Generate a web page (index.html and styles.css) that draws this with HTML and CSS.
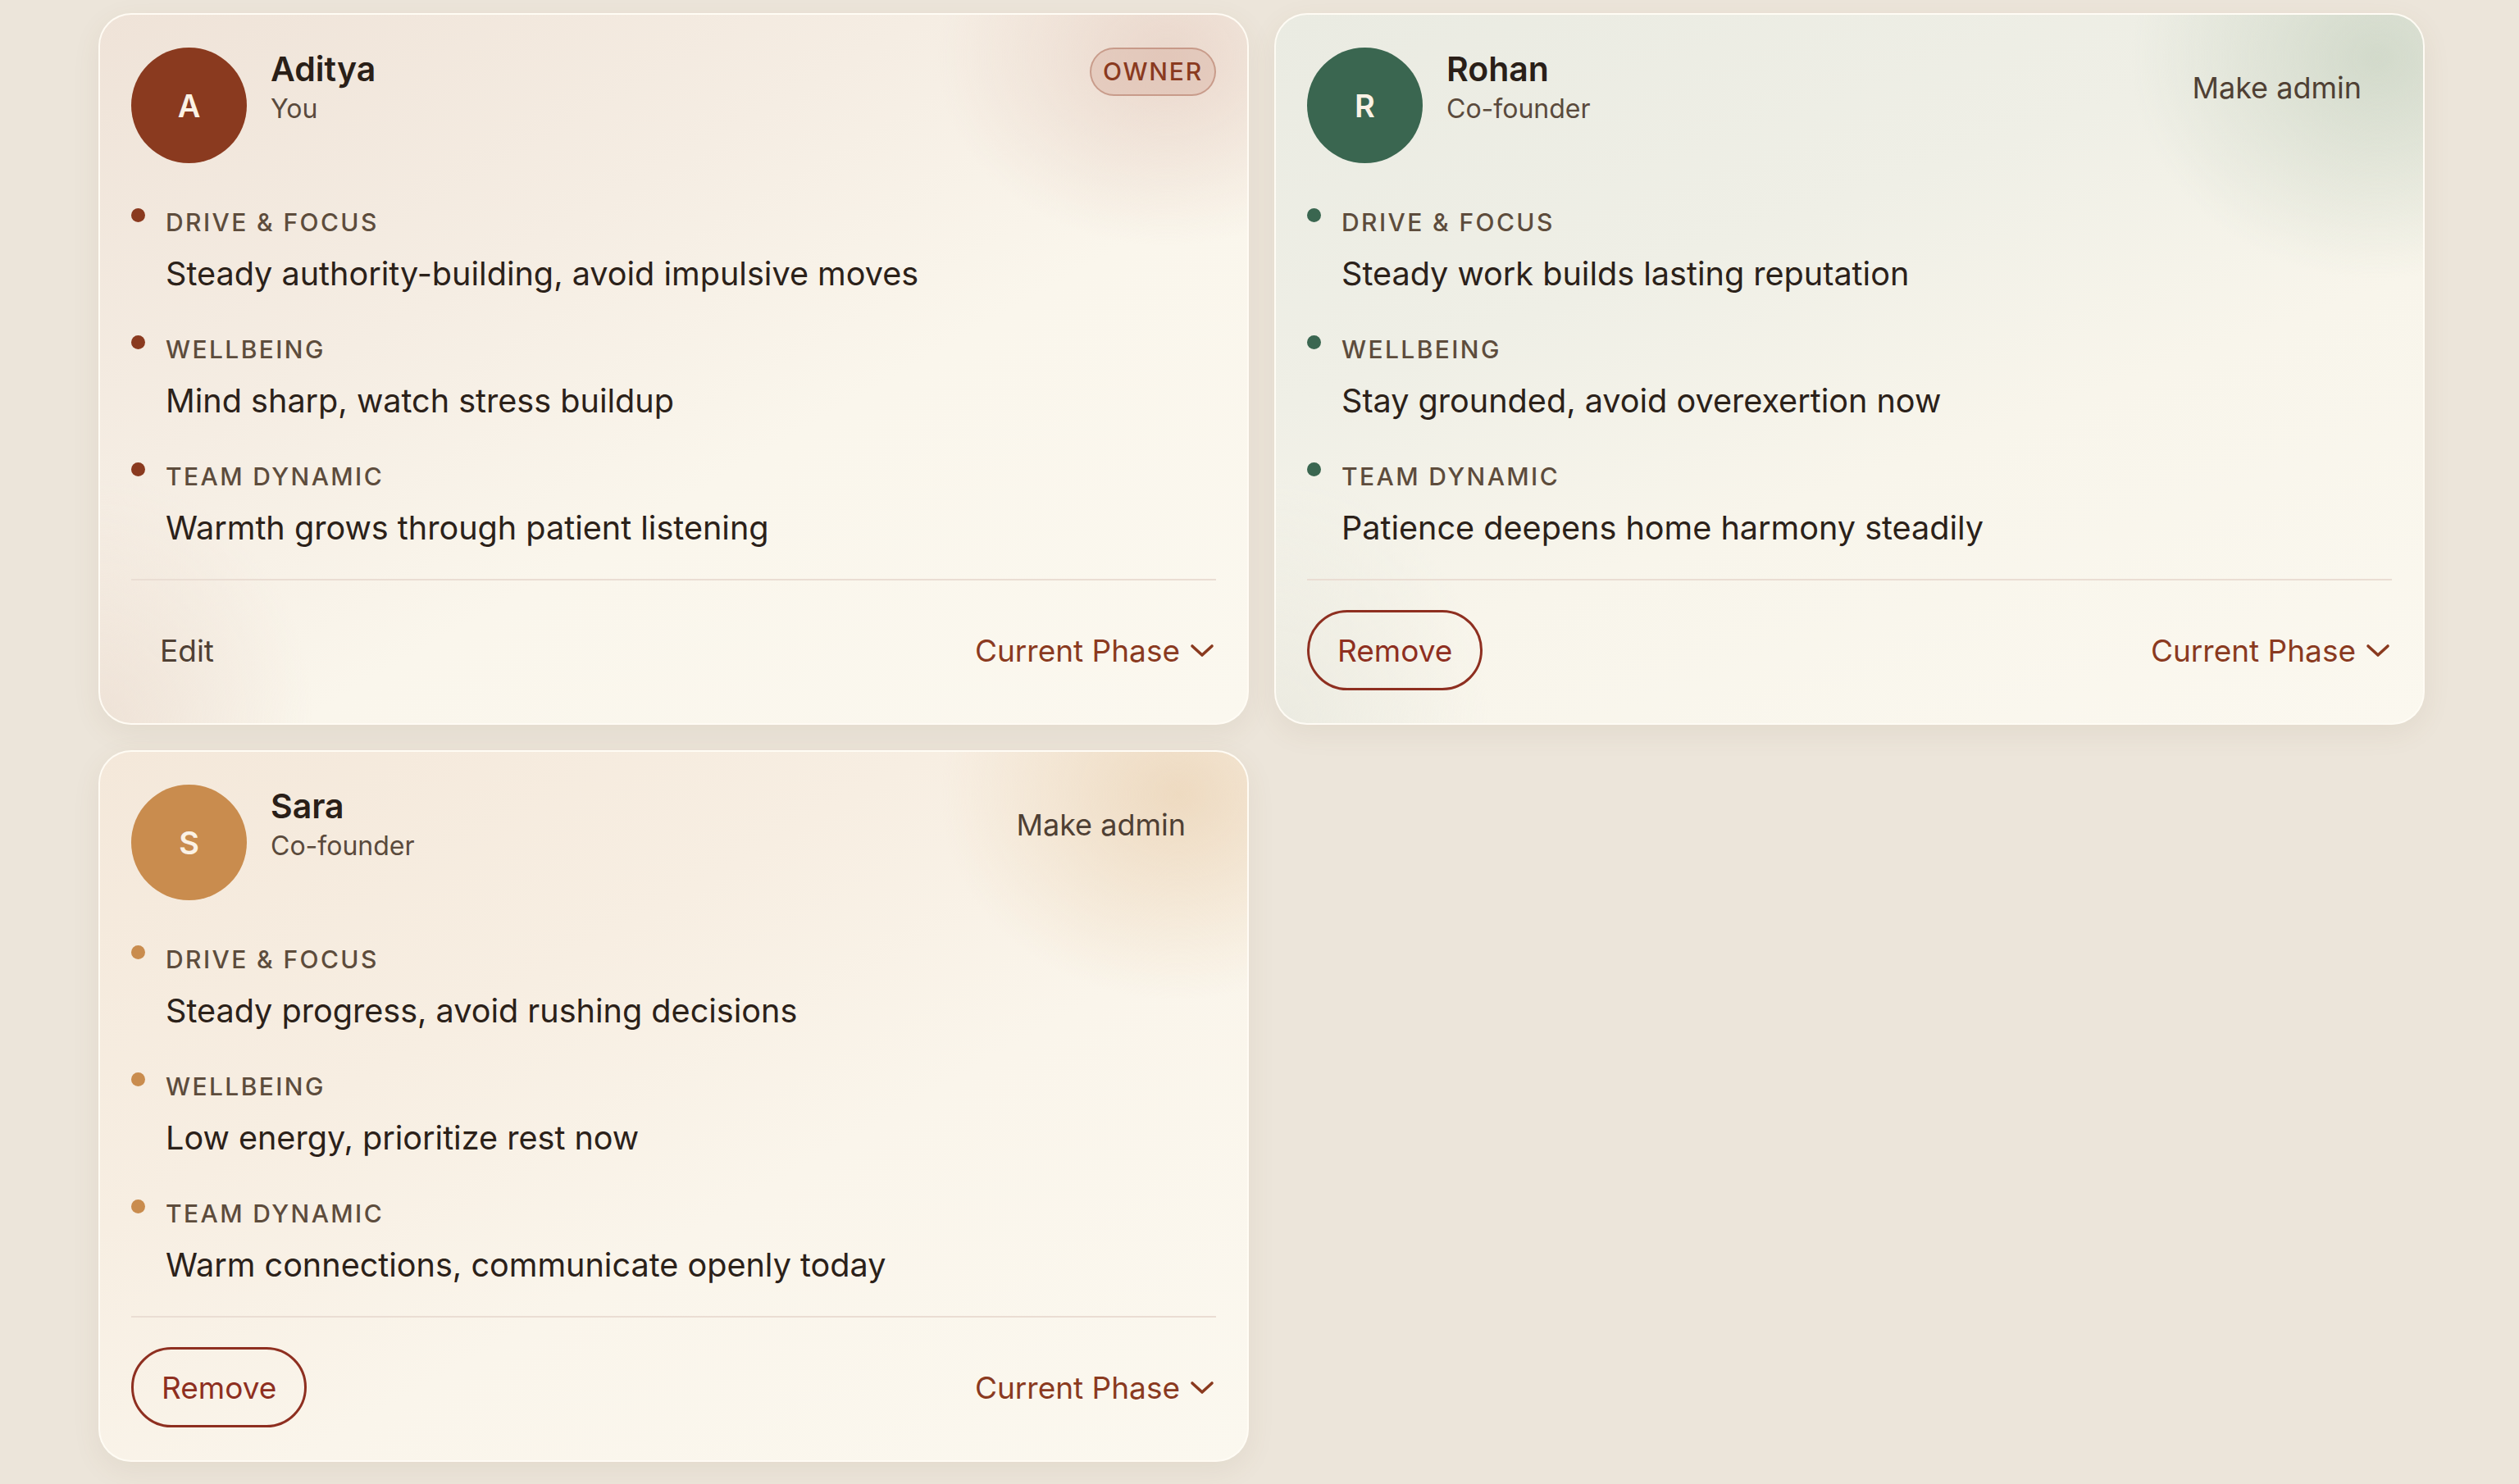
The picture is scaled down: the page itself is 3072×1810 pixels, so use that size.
FILE: index.html
```html
<!DOCTYPE html>
<html lang="en">
<head>
    <meta charset="UTF-8">
    <meta name="viewport" content="width=device-width, initial-scale=1.0">
    <title>Team - Members</title>
    <link rel="stylesheet" href="styles.css">
</head>
<body>
    <main class="page">
        <div class="member-grid">

            <div class="member-card rust">
                <div class="card-head">
                    <div class="avatar">A</div>
                    <div class="who">
                        <div class="name">Aditya</div>
                        <div class="role">You</div>
                    </div>
                    <span class="badge">OWNER</span>
                </div>
                <ul class="readings">
                    <li>
                        <span class="dot"></span>
                        <div>
                            <div class="label">Drive &amp; Focus</div>
                            <div class="value">Steady authority-building, avoid impulsive moves</div>
                        </div>
                    </li>
                    <li>
                        <span class="dot"></span>
                        <div>
                            <div class="label">Wellbeing</div>
                            <div class="value">Mind sharp, watch stress buildup</div>
                        </div>
                    </li>
                    <li>
                        <span class="dot"></span>
                        <div>
                            <div class="label">Team Dynamic</div>
                            <div class="value">Warmth grows through patient listening</div>
                        </div>
                    </li>
                </ul>
                <div class="card-foot">
                    <button class="pill ghost">Edit</button>
                    <button class="phase">Current Phase
                        <svg width="32" height="18" viewBox="0 0 32 18"><path d="M3 4 L15 15 L27 4" fill="none" stroke="currentColor" stroke-width="3.6" stroke-linecap="round" stroke-linejoin="round"/></svg>
                    </button>
                </div>
            </div>

            <div class="member-card moss">
                <div class="card-head">
                    <div class="avatar">R</div>
                    <div class="who">
                        <div class="name">Rohan</div>
                        <div class="role">Co-founder</div>
                    </div>
                    <button class="pill ghost admin">Make admin</button>
                </div>
                <ul class="readings">
                    <li>
                        <span class="dot"></span>
                        <div>
                            <div class="label">Drive &amp; Focus</div>
                            <div class="value">Steady work builds lasting reputation</div>
                        </div>
                    </li>
                    <li>
                        <span class="dot"></span>
                        <div>
                            <div class="label">Wellbeing</div>
                            <div class="value">Stay grounded, avoid overexertion now</div>
                        </div>
                    </li>
                    <li>
                        <span class="dot"></span>
                        <div>
                            <div class="label">Team Dynamic</div>
                            <div class="value">Patience deepens home harmony steadily</div>
                        </div>
                    </li>
                </ul>
                <div class="card-foot">
                    <button class="pill danger">Remove</button>
                    <button class="phase">Current Phase
                        <svg width="32" height="18" viewBox="0 0 32 18"><path d="M3 4 L15 15 L27 4" fill="none" stroke="currentColor" stroke-width="3.6" stroke-linecap="round" stroke-linejoin="round"/></svg>
                    </button>
                </div>
            </div>

            <div class="member-card ochre">
                <div class="card-head">
                    <div class="avatar">S</div>
                    <div class="who">
                        <div class="name">Sara</div>
                        <div class="role">Co-founder</div>
                    </div>
                    <button class="pill ghost admin">Make admin</button>
                </div>
                <ul class="readings">
                    <li>
                        <span class="dot"></span>
                        <div>
                            <div class="label">Drive &amp; Focus</div>
                            <div class="value">Steady progress, avoid rushing decisions</div>
                        </div>
                    </li>
                    <li>
                        <span class="dot"></span>
                        <div>
                            <div class="label">Wellbeing</div>
                            <div class="value">Low energy, prioritize rest now</div>
                        </div>
                    </li>
                    <li>
                        <span class="dot"></span>
                        <div>
                            <div class="label">Team Dynamic</div>
                            <div class="value">Warm connections, communicate openly today</div>
                        </div>
                    </li>
                </ul>
                <div class="card-foot">
                    <button class="pill danger">Remove</button>
                    <button class="phase">Current Phase
                        <svg width="32" height="18" viewBox="0 0 32 18"><path d="M3 4 L15 15 L27 4" fill="none" stroke="currentColor" stroke-width="3.6" stroke-linecap="round" stroke-linejoin="round"/></svg>
                    </button>
                </div>
            </div>

        </div>
    </main>
</body>
</html>
```

FILE: styles.css
```css
body {
    margin: 0;
    font-family: Inter, "Noto Sans", sans-serif;
    background-color: #ece5da;
    color: #2b2119;
}

.page {
    padding: 16px 116px 40px 120px;
}

.member-grid {
    display: grid;
    grid-template-columns: repeat(2, 1403px);
    gap: 31px;
}

.member-card {
    --accent: #8a3a1f;
    padding: 40px 38px 40px 38px;
    border: 2px solid rgba(255, 252, 244, 0.95);
    border-radius: 40px;
    background-color: #faf6ec;
    box-shadow: 0 10px 34px rgba(110, 84, 56, 0.08);
}

.member-card.rust {
    --accent: #8a3a1f;
    background:
        radial-gradient(ellipse 280px 230px at 93% 6%, rgba(228, 204, 192, 0.7), rgba(228, 204, 192, 0) 100%),
        radial-gradient(ellipse 260px 300px at 0% 100%, rgba(236, 222, 210, 0.8), rgba(236, 222, 210, 0) 100%),
        linear-gradient(150deg, #efe3d8 0%, #f5ede3 35%, #faf6ec 60%, #fbf8ef 100%);
}

.member-card.moss {
    --accent: #3a6650;
    background:
        radial-gradient(ellipse 300px 270px at 96% 6%, rgba(205, 214, 198, 0.85), rgba(205, 214, 198, 0) 100%),
        radial-gradient(ellipse 260px 300px at 0% 100%, rgba(232, 232, 222, 0.8), rgba(232, 232, 222, 0) 100%),
        linear-gradient(160deg, #eaebe2 0%, #efefe6 35%, #f8f5eb 60%, #fbf8ef 100%);
}

.member-card.ochre {
    --accent: #c98c4e;
    background:
        radial-gradient(ellipse 290px 250px at 94% 6%, rgba(236, 214, 186, 0.85), rgba(236, 214, 186, 0) 100%),
        linear-gradient(150deg, #f4e8da 0%, #f7eee2 35%, #faf5eb 60%, #fbf8ef 100%);
}

.card-head {
    display: flex;
    align-items: flex-start;
}

.avatar {
    flex: none;
    width: 141px;
    height: 141px;
    border-radius: 50%;
    background-color: var(--accent);
    color: #fbf2e5;
    display: flex;
    align-items: center;
    justify-content: center;
    font-size: 38px;
    font-weight: 600;
}

.who {
    flex: 1;
    margin-left: 29px;
}

.name {
    font-size: 41px;
    line-height: 52px;
    font-weight: 600;
    color: #2a1f18;
}

.role {
    font-size: 32px;
    line-height: 46px;
    color: #5a4a3c;
}

.badge {
    margin-top: 0;
    padding: 0 14px;
    height: 55px;
    line-height: 55px;
    border: 2px solid rgba(150, 70, 44, 0.35);
    border-radius: 30px;
    background-color: rgba(218, 180, 164, 0.45);
    color: #8a3a1f;
    font-size: 30px;
    font-weight: 500;
    letter-spacing: 0.06em;
}

.readings {
    list-style: none;
    margin: 52px 0 0 0;
    padding: 0 0 36px 0;
    border-bottom: 2px solid #eaddd3;
}

.readings li {
    display: grid;
    grid-template-columns: 17px 1fr;
    column-gap: 25px;
}

.readings li + li {
    margin-top: 46px;
}

.dot {
    width: 17px;
    height: 17px;
    margin-top: 3px;
    border-radius: 50%;
    background-color: var(--accent);
}

.label {
    font-size: 30px;
    line-height: 40px;
    font-weight: 500;
    letter-spacing: 0.08em;
    text-transform: uppercase;
    color: #5d4c3c;
}

.value {
    margin-top: 17px;
    font-size: 39.6px;
    line-height: 52px;
    color: #2b2119;
}

.card-foot {
    display: flex;
    justify-content: space-between;
    align-items: center;
    padding-top: 36px;
}

.pill {
    height: 98px;
    padding: 0 34px;
    border: 3px solid transparent;
    border-radius: 49px;
    background: none;
    font-family: inherit;
    font-size: 37px;
    cursor: pointer;
}

.pill.ghost {
    color: #4f4034;
}

.pill.ghost:first-child {
    padding-left: 32px;
}

.pill.danger {
    border-color: #8e2f20;
    color: #8e2f20;
}

.pill.admin {
    padding-right: 34px;
    font-size: 36px;
}

.phase {
    display: flex;
    align-items: center;
    gap: 12px;
    padding: 0;
    border: none;
    background: none;
    font-family: inherit;
    font-size: 37px;
    color: #8a3a1f;
    cursor: pointer;
}
```
